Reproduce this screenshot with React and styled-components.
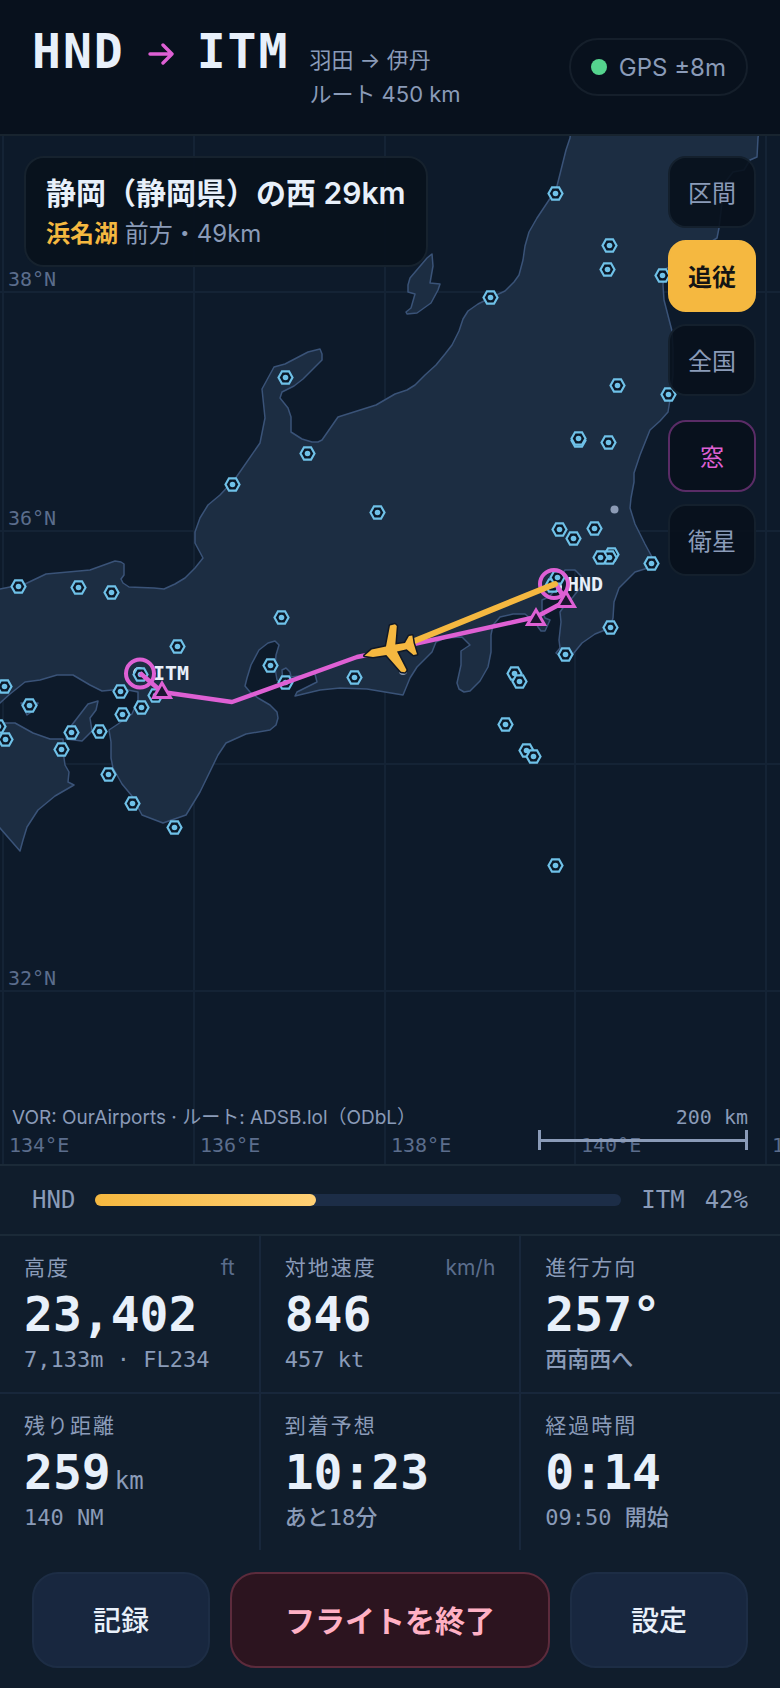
import styled, { createGlobalStyle } from "styled-components"

const sans = `Inter, "Noto Sans CJK JP", sans-serif`
const mono = `"DejaVu Sans Mono", "Noto Sans CJK JP", monospace`

const vors = [
    [555, 193], [609, 245], [607, 269], [662, 275], [490, 297], [617, 385], [668, 394],
    [578, 440], [578, 438], [608, 442], [559, 529], [573, 538], [594, 528], [611, 554],
    [609, 557], [600, 557], [651, 563], [552, 585], [557, 577], [285, 377], [307, 453],
    [232, 484], [377, 512], [18, 586], [78, 587], [111, 592], [281, 617], [177, 646],
    [270, 665], [285, 682], [354, 677], [4, 686], [29, 705], [120, 691], [122, 714],
    [155, 695], [141, 707], [140, 674], [71, 732], [99, 731], [-2, 726], [5, 739],
    [61, 749], [108, 774], [132, 803], [174, 827], [610, 627], [565, 654], [514, 673],
    [519, 681], [505, 724], [526, 750], [533, 756], [555, 865],
]

const meridians = [
    { x: 3, label: "134°E" },
    { x: 194, label: "136°E" },
    { x: 385, label: "138°E" },
    { x: 575, label: "140°E" },
    { x: 766, label: "142°E" },
]

const parallels = [
    { y: 292, label: "38°N" },
    { y: 531, label: "36°N" },
    { y: 764 },
    { y: 991, label: "32°N" },
]

const fixes = [[162, 682], [566, 591], [536, 609]]

const honshu = "M571 130L570 138L566 150L561 170L556 190L549 200L537 218L529 232L525 246L523 260L519 275L514 282L505 291L490 298L478 304L468 311L463 319L459 331L452 345L445 354L436 365L425 375L415 385L407 390L395 394L376 405L338 417L322 440L318 442L312 442L302 439L291 432L291 417L288 408L280 398L282 392L294 386L303 379L322 360L322 354L320 349L308 352L285 364L274 367L262 389L265 418L260 443L235 479L220 495L208 505L200 518L195 532L195 543L203 558L195 568L185 578L175 584L164 589L154 588L129 587L123 583L121 579L124 575L124 564L121 562L115 561L90 570L46 574L25 584L0 589L-10 591V710L0 703L10 694L25 682L40 680L57 675L73 675L90 685L102 691L123 689L138 692L138 700L132 714L118 724L109 730L111 742L111 758L113 768L122 784L132 796L142 815L163 823L186 815L200 792L218 755L226 743L246 734L270 730L276 725L278 718L277 712L270 705L258 698L250 692L245 686L247 678L251 665L259 650L268 643L275 641L279 645L276 655L275 668L277 680L283 683L282 670L286 668L290 672L291 677L315 674L317 682L297 692L295 696L320 690L340 688L367 689L403 695L410 678L417 667L432 652L436 642L445 638L462 637L470 645L461 651L461 665L457 683L459 689L464 692L470 691L480 681L488 667L491 652L491 635L493 625L500 617L513 614L525 614L531 619L535 621L538 627L541 631L545 631L550 620L545 618L542 610L542 600L549 597L556 589L560 577L565 570L575 570L581 576L583 584L573 597L565 605L560 612L561 622L559 640L560 648L556 653L560 656L573 654L582 643L595 634L610 628L613 618L614 602L619 588L635 572L648 568L652 557L645 544L635 524L630 508L631 498L634 482L634 473L640 455L650 430L660 421L668 412L670 400L673 375L673 350L672 331L664 300L663 285L664 270L690 255L717 238L719 228L722 203L723 185L733 172L744 170L750 160L757 157L758 138L759 130Z"
const sado = "M410 278L427 258L432 254L433 266L430 283L440 284L438 290L431 303L417 313L407 314L406 312L411 308L415 294L408 292L408 285Z"
const awaji = "M98 701L96 710L90 718L92 731L82 741L66 739L68 730L78 717L88 704Z"
const shikoku = "M-10 723L7 723L15 723L33 733L50 739L63 739L64 758L65 765L69 772L68 782L74 785L55 796L38 810L27 827L23 840L20 851L0 828L-10 816Z"
const shodo = "M21 703L38 703L33 711L27 715Z"

const stats = [
    { label: "高度", unit: "ft", value: "23,402", sub: "7,133m · FL234" },
    { label: "対地速度", unit: "km/h", value: "846", sub: "457 kt" },
    { label: "進行方向", value: "257°", sub: "西南西へ" },
    { label: "残り距離", value: "259", suffix: "km", sub: "140 NM" },
    { label: "到着予想", value: "10:23", sub: "あと18分" },
    { label: "経過時間", value: "0:14", sub: "09:50 開始" },
]

export default function App(){
    const progress = 42
    return(
        <Page>
            <GlobalStyle />
            <Header>
                <Route>
                    <Codes>
                        HND
                        <Arrow viewBox="0 0 26 22" aria-hidden="true">
                            <path d="M2 11H24M15 2L24 11L15 20" />
                        </Arrow>
                        ITM
                    </Codes>
                    <RouteInfo>羽田 → 伊丹<br />ルート 450 km</RouteInfo>
                </Route>
                <GpsStatus><Dot />GPS ±8m</GpsStatus>
            </Header>
            <MapArea>
                <ChartMap />
                <PlaceCard>
                    <h2>静岡（静岡県）の西 29km</h2>
                    <p><strong>浜名湖</strong> 前方・49km</p>
                </PlaceCard>
                <MapControls>
                    <MapButton type="button">区間</MapButton>
                    <MapButton type="button" $active>追従</MapButton>
                    <MapButton type="button">全国</MapButton>
                    <MapButton type="button" $accent>窓</MapButton>
                    <MapButton type="button">衛星</MapButton>
                </MapControls>
                <Credits>VOR: OurAirports · ルート: ADSB.lol（ODbL）</Credits>
                <Scale>
                    200 km
                    <ScaleBar />
                </Scale>
            </MapArea>
            <Progress>
                <span>HND</span>
                <Track><Fill style={{ width: `${progress}%` }} /></Track>
                <span>ITM</span>
                <span>{progress}%</span>
            </Progress>
            <Stats>
                {stats.map((s) => (
                    <Stat key={s.label}>
                        <StatHead>
                            <h3>{s.label}</h3>
                            {s.unit && <small>{s.unit}</small>}
                        </StatHead>
                        <StatValue>{s.value}{s.suffix && <small>{s.suffix}</small>}</StatValue>
                        <StatSub>{s.sub}</StatSub>
                    </Stat>
                ))}
            </Stats>
            <Actions>
                <ActionButton type="button">記録</ActionButton>
                <ActionButton type="button" $danger>フライトを終了</ActionButton>
                <ActionButton type="button">設定</ActionButton>
            </Actions>
        </Page>
    )
}

function ChartMap(){
    return(
        <MapSvg viewBox="0 136 780 1028" preserveAspectRatio="xMidYMid slice" role="img" aria-label="飛行ルートの地図">
            <g stroke="#142335" strokeWidth="2">
                {meridians.map((m) => <path key={m.x} d={`M${m.x} 130V1170`} />)}
                {parallels.map((p) => <path key={p.y} d={`M-10 ${p.y}H790`} />)}
            </g>
            <g fill="#1c2d42" stroke="#3a5378" strokeWidth="1.5" strokeLinejoin="round">
                {[honshu, sado, awaji, shikoku, shodo].map((d) => <path key={d} d={d} />)}
            </g>
            <MapLabels>
                {parallels.map((p) => p.label && <text key={p.y} x="8" y={p.y - 6}>{p.label}</text>)}
                {meridians.map((m) => <text key={m.x} x={m.x + 6} y="1152">{m.label}</text>)}
            </MapLabels>
            <circle cx="614.5" cy="509.5" r="4" fill="#8c9bb5" />
            <circle cx="403" cy="671" r="4" fill="#8c9bb5" />
            <circle cx="139" cy="673" r="6" fill="#e8f0fa" />
            <circle cx="557" cy="587" r="5" fill="#e8f0fa" />
            {vors.map(([x, y]) => (
                <g key={`${x}-${y}`} transform={`translate(${x + 0.5} ${y + 0.5})`}>
                    <path d="M-7 0L-3.5 -6.2H3.5L7 0L3.5 6.2H-3.5Z" fill="#0b1828" stroke="#6fc1e8" strokeWidth="2.2" />
                    <circle r="2.8" fill="#6fc1e8" />
                </g>
            ))}
            <AirportLabels>
                <text x="567" y="591">HND</text>
                <text x="153" y="680">ITM</text>
            </AirportLabels>
            <g fill="none" stroke="#de60d4">
                <path d="M140 673L162 692L232 702L357 657L372 654L405 646L536 617L566 601L556 584" strokeWidth="4.5" strokeLinejoin="round" />
                <circle cx="140" cy="673.5" r="14" strokeWidth="4" />
                <circle cx="554" cy="584" r="14" strokeWidth="4" />
            </g>
            {fixes.map(([x, y]) => (
                <path key={x} d={`M${x} ${y + 1}L${x + 8.5} ${y + 15.5}H${x - 8.5}Z`} fill="#1c1430" stroke="#de60d4" strokeWidth="3" />
            ))}
            <path d="M412 642L555 584" stroke="#f5b840" strokeWidth="6" strokeLinecap="round" />
            <path
                d="M364.5 655.7L371.7 649.5L386 646.5L390 625.5L395 624.3L396.8 626L395.3 644.5L405 643L409 636L412.3 635.5L413.5 643L417 654.3L413.5 655L406.7 649.3L397 651.5L406.5 670L405 672.3L401 671.8L386.3 655L373 657Z"
                fill="#f5b840"
                stroke="#101826"
                strokeWidth="3"
                strokeLinejoin="round"
                paintOrder="stroke"
            />
        </MapSvg>
    )
}

const GlobalStyle = createGlobalStyle`
    *{
        box-sizing: border-box;
        margin: 0;
        padding: 0;
    }
    body{
        background: #101d2c;
        color: #e8f0fa;
        font-family: ${sans};
    }
    button{
        font-family: inherit;
        cursor: pointer;
    }
`
const Page = styled.div`
    display: flex;
    flex-direction: column;
    width: 100%;
    min-height: 100vh;
`
const Header = styled.header`
    display: flex;
    align-items: center;
    justify-content: space-between;
    min-height: 136px;
    padding: 20px 32px;
    background: #08111d;
    border-bottom: 2px solid #18242f;
`
const Route = styled.div`
    display: flex;
    align-items: baseline;
    gap: 20px;
`
const Codes = styled.h1`
    display: flex;
    align-items: center;
    font-family: ${mono};
    font-size: 48px;
    line-height: 56px;
    letter-spacing: 2px;
`
const Arrow = styled.svg`
    width: 26px;
    height: 22px;
    margin: 6px 23px 0 23px;
    path{
        fill: none;
        stroke: #de60d4;
        stroke-width: 3.4;
        stroke-linecap: round;
        stroke-linejoin: round;
    }
`
const RouteInfo = styled.p`
    font-size: 22px;
    line-height: 34px;
    color: #8a9bb8;
`
const GpsStatus = styled.div`
    display: flex;
    align-items: center;
    gap: 12px;
    height: 58px;
    padding: 0 20px;
    border: 2px solid #151f2b;
    border-radius: 29px;
    font-size: 24px;
    color: #8a9bb8;
`
const Dot = styled.span`
    width: 16px;
    height: 16px;
    border-radius: 50%;
    background: #55d48e;
`
const MapArea = styled.main`
    position: relative;
    flex: 1;
    min-height: 600px;
    overflow: hidden;
    background: #0d1a2a;
`
const MapSvg = styled.svg`
    position: absolute;
    inset: 0;
    width: 100%;
    height: 100%;
`
const MapLabels = styled.g`
    font-family: ${mono};
    font-size: 20px;
    fill: #5b6d8c;
`
const AirportLabels = styled.g`
    font-family: ${mono};
    font-size: 20px;
    font-weight: 700;
    fill: #e8f0fa;
`
const PlaceCard = styled.section`
    position: absolute;
    top: 20px;
    left: 24px;
    padding: 14px 20px;
    background: rgba(8, 17, 28, 0.92);
    border: 2px solid #16222e;
    border-radius: 20px;
    h2{
        font-size: 30px;
        font-weight: 600;
        line-height: 42px;
    }
    p{
        margin-top: 3px;
        font-size: 24px;
        line-height: 34px;
        color: #8a9bb8;
    }
    strong{
        font-weight: 600;
        color: #f5b840;
    }
`
const MapControls = styled.div`
    position: absolute;
    top: 20px;
    right: 24px;
    display: flex;
    flex-direction: column;
    gap: 12px;
`
const MapButton = styled.button`
    width: 88px;
    height: 72px;
    margin-top: ${({ $accent }) => $accent ? "12px" : "0"};
    padding-bottom: 2px;
    background: ${({ $active }) => $active ? "#f5b840" : "rgba(8, 17, 28, 0.9)"};
    border: 2px solid ${({ $active, $accent }) => $active ? "#f5b840" : $accent ? "#5a2c66" : "#14202d"};
    border-radius: 18px;
    font-size: 24px;
    font-weight: ${({ $active }) => $active ? 600 : 400};
    color: ${({ $active, $accent }) => $active ? "#141414" : $accent ? "#de60d4" : "#8a9bb8"};
`
const Credits = styled.p`
    position: absolute;
    left: 12px;
    bottom: 33px;
    font-size: 19px;
    line-height: 26px;
    color: #8a9bb8;
`
const Scale = styled.div`
    position: absolute;
    right: 32px;
    bottom: 14px;
    width: 210px;
    font-family: ${mono};
    font-size: 20px;
    line-height: 26px;
    text-align: right;
    color: #8a9bb8;
`
const ScaleBar = styled.div`
    display: flex;
    align-items: center;
    height: 20px;
    border: solid #8a9bb8;
    border-width: 0 3px;
    &::before{
        content: "";
        flex: 1;
        height: 3px;
        background: #8a9bb8;
    }
`
const Progress = styled.section`
    display: flex;
    align-items: center;
    gap: 20px;
    height: 72px;
    padding: 0 32px;
    background: #101d2c;
    border: solid #1b2a38;
    border-width: 2px 0;
    font-family: ${mono};
    font-size: 24px;
    color: #8a9bb8;
`
const Track = styled.div`
    flex: 1;
    height: 12px;
    border-radius: 6px;
    background: #1c2d47;
`
const Fill = styled.div`
    height: 100%;
    border-radius: 6px;
    background: linear-gradient(90deg, #f5b840, #ffd075);
`
const Stats = styled.section`
    display: grid;
    grid-template-columns: repeat(3, 1fr);
    gap: 2px;
    background: #18273b;
`
const Stat = styled.div`
    height: 156px;
    padding: 16px 24px;
    background: #101d2c;
`
const StatHead = styled.div`
    display: flex;
    justify-content: space-between;
    line-height: 32px;
    h3{
        font-size: 21px;
        font-weight: 400;
        letter-spacing: 2px;
        color: #8a9bb8;
    }
    small{
        font-size: 21px;
        color: #5b6d8c;
    }
`
const StatValue = styled.p`
    font-family: ${mono};
    font-size: 48px;
    font-weight: 700;
    line-height: 60px;
    small{
        margin-left: 4px;
        font-size: 24px;
        font-weight: 400;
        line-height: 24px;
        color: #8a9bb8;
    }
`
const StatSub = styled.p`
    font-family: ${mono};
    font-size: 22px;
    font-weight: 500;
    line-height: 32px;
    color: #8a9bb8;
`
const Actions = styled.footer`
    display: grid;
    grid-template-columns: 1fr 1.8fr 1fr;
    gap: 20px;
    padding: 22px 32px 20px;
    background: #101d2c;
`
const ActionButton = styled.button`
    height: 96px;
    padding-bottom: 2px;
    background: ${({ $danger }) => $danger ? "#2c141f" : "#18273f"};
    border: 2px solid ${({ $danger }) => $danger ? "#5c2b3c" : "#1d2d45"};
    border-radius: 26px;
    font-size: ${({ $danger }) => $danger ? "30px" : "28px"};
    font-weight: ${({ $danger }) => $danger ? 700 : 500};
    color: ${({ $danger }) => $danger ? "#ffb0c4" : "#e8f0fa"};
`
